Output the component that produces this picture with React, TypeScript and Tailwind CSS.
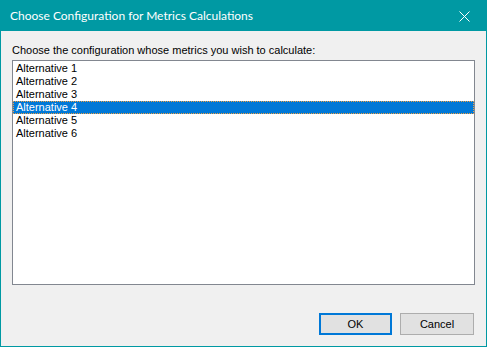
export default function App() {
  const items = ["Alternative 1", "Alternative 2", "Alternative 3", "Alternative 4", "Alternative 5", "Alternative 6"];
  const selected = 3;

  return (
    <div
      className="w-[487px] h-[347px] flex flex-col border border-[#0099a3] bg-[#f0f0f0] text-[11px] text-black"
      style={{ fontFamily: '"Liberation Sans", Arial, sans-serif' }}
    >
      {/* Title bar */}
      <div className="h-[30px] shrink-0 bg-[#0099a3] flex items-center justify-between pl-[9px] pr-[16px] text-white">
        <span className="leading-none text-[12px]" style={{ fontFamily: 'Lato, "Noto Sans", sans-serif' }}>
          Choose Configuration for Metrics Calculations
        </span>
        <svg width="11" height="11" viewBox="0 0 11 11" className="block">
          <path d="M0.5 0.5 L10.5 10.5 M10.5 0.5 L0.5 10.5" stroke="white" strokeWidth="1" />
        </svg>
      </div>

      {/* Body */}
      <div className="flex-1 flex flex-col px-[11px] pt-[11px] pb-[11px]">
        <div className="h-[18px] leading-[17px]">Choose the configuration whose metrics you wish to calculate:</div>
        <div className="h-[225px] border border-[#828790] bg-white pt-[1px] flex flex-col">
          {items.map((it, i) => (
            <div
              key={it}
              className={
                "h-[13px] leading-[13px] pl-[3px] " +
                (i === selected ? "bg-[#0078d7] text-white outline outline-1 outline-dotted outline-[#f0a040] -outline-offset-1" : "")
              }
            >
              {it}
            </div>
          ))}
        </div>
        <div className="flex-1" />
        <div className="flex justify-end gap-[8px] pr-[1px]">
          <button className="w-[73px] h-[22px] border-2 border-[#0078d7] bg-[#e1e1e1] leading-none">OK</button>
          <button className="w-[74px] h-[22px] border border-[#adadad] bg-[#e1e1e1] leading-none">Cancel</button>
        </div>
      </div>
    </div>
  );
}
